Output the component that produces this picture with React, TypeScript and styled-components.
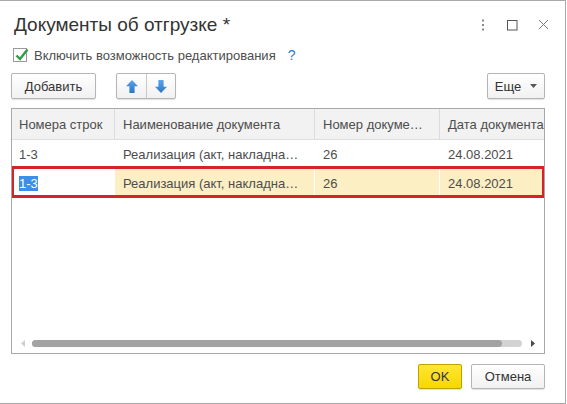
import React from "react";
import styled, { createGlobalStyle } from "styled-components";

const Global = createGlobalStyle`
  html, body { margin: 0; padding: 0; background: #fff; }
  body { font-family: Arial, "Liberation Sans", sans-serif; }
  * { box-sizing: border-box; }
`;

const Window = styled.div`
  width: 566px;
  height: 404px;
  border-top: 1px solid #a8a8a8;
  border-right: 1px solid #a8a8a8;
  border-bottom: 1px solid #a8a8a8;
  background: #fff;
  display: flex;
  flex-direction: column;
  padding: 0 20px 0 11px;
`;

const TitleBar = styled.div`
  height: 47px;
  display: flex;
  align-items: center;
`;

const Title = styled.div`
  padding-left: 3px;
  font-size: 19px;
  color: #333;
  white-space: nowrap;
`;

const TitleIcons = styled.div`
  margin-left: auto;
  margin-right: -4px;
  display: flex;
  align-items: center;
  gap: 20px;
`;

const CheckRow = styled.div`
  height: 14px;
  display: flex;
  align-items: center;
  margin-left: 2px;
`;

const CheckBox = styled.div`
  position: relative;
  width: 14px;
  height: 14px;
  border: 1px solid #9a9a9a;
  background: #fff;
  flex: none;
  svg { position: absolute; left: 0; top: -2px; }
`;

const CheckLabel = styled.span`
  margin-left: 7px;
  font-size: 13px;
  color: #4d4d4d;
  white-space: nowrap;
`;

const Help = styled.span`
  margin-left: 12px;
  font-size: 14px;
  color: #2a7dd0;
`;

const Toolbar = styled.div`
  margin-top: 11px;
  height: 26px;
  display: flex;
  align-items: center;
`;

const Button = styled.button<{ $w: number; $primary?: boolean }>`
  width: ${(p) => p.$w}px;
  height: 26px;
  padding: 0;
  display: flex;
  align-items: center;
  justify-content: center;
  gap: 9px;
  font-family: Arial, "Liberation Sans", sans-serif;
  font-size: 13px;
  color: #333;
  border: 1px solid ${(p) => (p.$primary ? "#bfa100" : "#b5b5b5")};
  border-radius: 2px;
  background: ${(p) =>
    p.$primary
      ? "linear-gradient(#ffe633, #f7d800)"
      : "linear-gradient(#ffffff, #f1f1f1)"};
  box-shadow: 0 1px 1px rgba(0, 0, 0, 0.12);
`;

const Group = styled.div`
  margin-left: 20px;
  display: flex;
  height: 26px;
  border: 1px solid #b5b5b5;
  border-radius: 2px;
  background: linear-gradient(#ffffff, #f1f1f1);
  box-shadow: 0 1px 1px rgba(0, 0, 0, 0.12);
`;

const GroupBtn = styled.div`
  width: 29px;
  display: flex;
  align-items: center;
  justify-content: center;
  & + & { border-left: 1px solid #c8c8c8; }
`;

const Spacer = styled.div`
  flex: 1;
`;

const Table = styled.div`
  margin-top: 9px;
  height: 246px;
  border: 1px solid #a8a8a8;
  display: flex;
  flex-direction: column;
  overflow: hidden;
`;

const Row = styled.div<{ $head?: boolean; $selected?: boolean }>`
  position: relative;
  display: grid;
  grid-template-columns: 102px 200px 125px 170px;
  height: ${(p) => (p.$head ? 31 : 29)}px;
  background: ${(p) => (p.$head ? "#f2f2f2" : "#fff")};
  border-bottom: 1px solid ${(p) => (p.$head ? "#dedede" : "#f0f0f0")};
  ${(p) =>
    p.$selected &&
    `
    border-bottom-color: transparent;
    &::after {
      content: "";
      position: absolute;
      left: -1px;
      right: -1px;
      top: -3px;
      bottom: -1px;
      border: 3px solid #d8212b;
      pointer-events: none;
    }
  `}
`;

const Cell = styled.div<{ $head?: boolean; $hl?: boolean; $first?: boolean }>`
  display: flex;
  align-items: center;
  padding-left: ${(p) => (p.$first ? 7 : 8)}px;
  font-size: 13px;
  color: #4d4d4d;
  white-space: nowrap;
  overflow: hidden;
  background: ${(p) => (p.$hl ? "#fcefc4" : "transparent")};
  border-left: ${(p) =>
    p.$first ? "none" : p.$head ? "1px solid #dcdcdc" : "1px solid #fff"};
`;

const SelText = styled.span`
  background: #3b8fe8;
  color: #fff;
`;

const TableBody = styled.div`
  flex: 1;
`;

const ScrollRow = styled.div`
  height: 7px;
  margin-bottom: 6px;
  display: flex;
  align-items: center;
  padding-left: 9px;
`;

const Track = styled.div`
  margin-left: 7px;
  width: 490px;
  height: 7px;
  border-radius: 4px;
  background: #d3d3d3;
  display: flex;
`;

const Thumb = styled.div`
  height: 7px;
  border-radius: 4px;
  background: #a3a3a3;
`;

const RightArrow = styled.div`
  margin-left: 9px;
  display: flex;
`;

const Footer = styled.div`
  margin-top: 10px;
  display: flex;
  justify-content: flex-end;
  gap: 9px;
  button { height: 25px; }
`;

const ArrowUp = () => (
  <svg width="12" height="13" viewBox="0 0 12 13">
    <defs>
      <linearGradient id="ab" x1="0" y1="0" x2="0" y2="1">
        <stop offset="0" stopColor="#5aa5ec" />
        <stop offset="1" stopColor="#2c76c4" />
      </linearGradient>
    </defs>
    <path d="M6 0 L12 6.2 H8.6 V13 H3.4 V6.2 H0 Z" fill="url(#ab)" />
  </svg>
);

const ArrowDown = () => (
  <svg width="12" height="13" viewBox="0 0 12 13">
    <defs>
      <linearGradient id="ab2" x1="0" y1="0" x2="0" y2="1">
        <stop offset="0" stopColor="#5aa5ec" />
        <stop offset="1" stopColor="#2c76c4" />
      </linearGradient>
    </defs>
    <path d="M6 13 L12 6.8 H8.6 V0 H3.4 V6.8 H0 Z" fill="url(#ab2)" />
  </svg>
);

export default function App() {
  return (
    <>
      <Global />
      <Window>
        <TitleBar>
          <Title>Документы об отгрузке *</Title>
          <TitleIcons>
            <svg width="6" height="12" viewBox="0 0 6 12">
              <rect x="2" y="0.5" width="2" height="2" fill="#8a8a8a" />
              <rect x="2" y="5" width="2" height="2" fill="#8a8a8a" />
              <rect x="2" y="9.5" width="2" height="2" fill="#8a8a8a" />
            </svg>
            <svg width="12" height="12" viewBox="0 0 12 12">
              <rect x="1.5" y="1.5" width="9.5" height="9.5" fill="none" stroke="#555" strokeWidth="1" />
            </svg>
            <svg width="11" height="11" viewBox="0 0 11 11">
              <path d="M1 1 L10 10 M10 1 L1 10" stroke="#7a7a7a" strokeWidth="1" />
            </svg>
          </TitleIcons>
        </TitleBar>

        <CheckRow>
          <CheckBox>
            <svg width="16" height="16" viewBox="0 0 16 16">
              <path d="M2.5 8.5 L6 12 L13.5 2.5" fill="none" stroke="#2f9e44" strokeWidth="2.4" />
            </svg>
          </CheckBox>
          <CheckLabel>Включить возможность редактирования</CheckLabel>
          <Help>?</Help>
        </CheckRow>

        <Toolbar>
          <Button $w={85}>Добавить</Button>
          <Group>
            <GroupBtn><ArrowUp /></GroupBtn>
            <GroupBtn><ArrowDown /></GroupBtn>
          </Group>
          <Spacer />
          <Button $w={58}>
            Еще
            <svg width="7" height="4" viewBox="0 0 7 4">
              <path d="M0 0 H7 L3.5 4 Z" fill="#555" />
            </svg>
          </Button>
        </Toolbar>

        <Table>
          <Row $head>
            <Cell $head $first>Номера строк</Cell>
            <Cell $head>Наименование документа</Cell>
            <Cell $head>Номер докуме…</Cell>
            <Cell $head>Дата документа</Cell>
          </Row>
          <Row>
            <Cell $first>1-3</Cell>
            <Cell>Реализация (акт, накладна…</Cell>
            <Cell>26</Cell>
            <Cell>24.08.2021</Cell>
          </Row>
          <Row $selected>
            <Cell $first><SelText>1-3</SelText></Cell>
            <Cell $hl>Реализация (акт, накладна…</Cell>
            <Cell $hl>26</Cell>
            <Cell $hl>24.08.2021</Cell>
          </Row>
          <TableBody />
          <ScrollRow>
            <svg width="4" height="7" viewBox="0 0 4 7">
              <path d="M4 0 V7 L0 3.5 Z" fill="#cfcfcf" />
            </svg>
            <Track>
              <Thumb style={{ width: "96%" }} />
            </Track>
            <RightArrow>
              <svg width="4" height="7" viewBox="0 0 4 7">
                <path d="M0 0 V7 L4 3.5 Z" fill="#4a4a4a" />
              </svg>
            </RightArrow>
          </ScrollRow>
        </Table>

        <Footer>
          <Button $w={44} $primary>OK</Button>
          <Button $w={74}>Отмена</Button>
        </Footer>
      </Window>
    </>
  );
}
